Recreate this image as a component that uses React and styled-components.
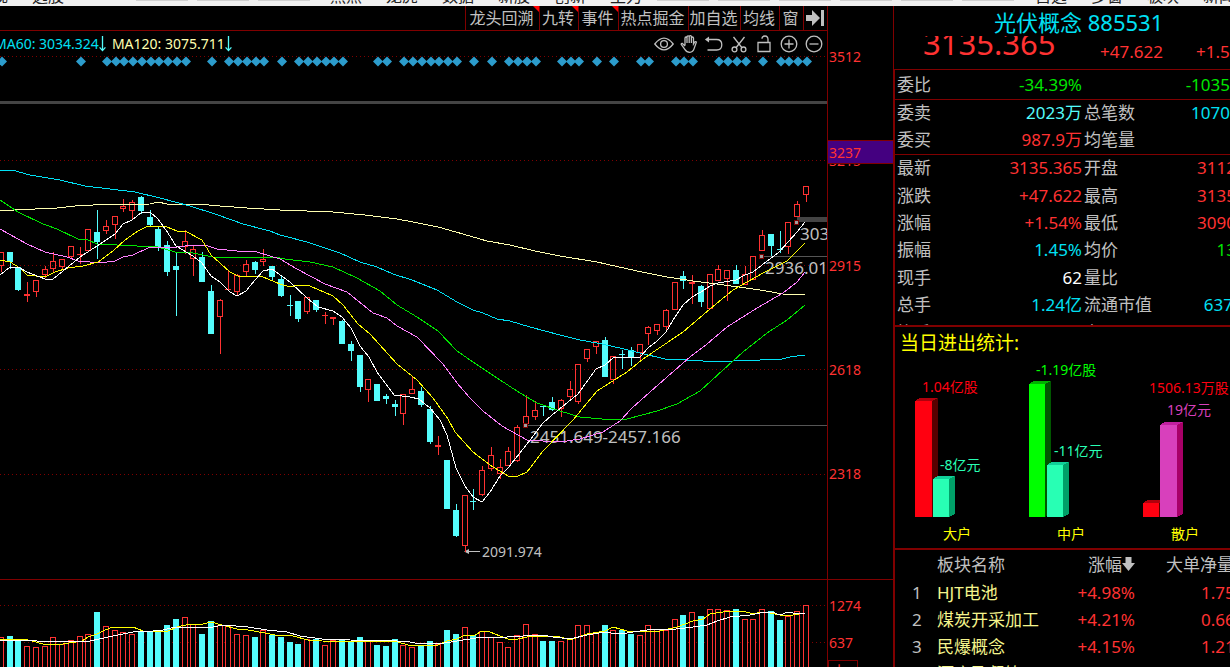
import React from "react";
import styled, { createGlobalStyle } from "styled-components";

const C = {
  line: "#800000",
  red: "#ff3232",
  cyan: "#54fcfc",
  blue: "#00e0f4",
  green: "#00e600",
  grey: "#c0c0c0",
  cream: "#ffffb0",
  pink: "#ff80ff",
};

const Global = createGlobalStyle`
  * { box-sizing: border-box; }
  body {
    margin: 0;
    background: #000;
    color: ${C.grey};
    font-family: "Noto Sans", "Noto Sans CJK SC", sans-serif;
    font-size: 17px;
    overflow: hidden;
  }
  button { font: inherit; color: inherit; background: none; border: 0; padding: 0; cursor: pointer; }
  h1, h2 { margin: 0; font-weight: 400; }
`;

/* ---------- data ---------- */

const STEP = 8.75;
const cx = (i) => Math.round(1.4 + i * STEP - 0.5);

// [kind, high, bodyTop, bodyBottom, low] ; kind: r = hollow, s = solid red, c = cyan
const CANDLES = [
  ["r", 252, 252, 266, 272], ["c", 252, 252, 262, 269], ["c", 267, 267, 290, 291],
  ["s", 282, 294, 296, 302], ["r", 280, 280, 292, 297], ["r", 266, 269, 275, 278],
  ["r", 252, 261, 269, 272], ["r", 259, 259, 267, 270], ["r", 246, 246, 257, 259],
  ["s", 247, 254, 255, 264], ["r", 229, 229, 251, 251], ["c", 210, 232, 242, 259],
  ["r", 220, 226, 231, 234], ["r", 216, 216, 225, 239], ["r", 199, 206, 209, 212],
  ["r", 200, 202, 211, 220], ["c", 196, 197, 211, 214], ["c", 210, 217, 225, 226],
  ["c", 227, 229, 247, 251], ["c", 241, 245, 272, 276], ["c", 253, 266, 270, 316],
  ["r", 230, 241, 247, 254], ["r", 246, 249, 259, 276], ["c", 252, 257, 282, 282],
  ["c", 285, 291, 334, 334], ["r", 299, 300, 317, 354], ["s", 271, 289, 290, 290],
  ["r", 274, 275, 292, 296], ["r", 260, 264, 272, 276], ["c", 261, 262, 270, 274],
  ["r", 249, 259, 262, 266], ["c", 266, 266, 277, 281], ["c", 276, 279, 296, 297],
  ["c", 295, 305, 306, 316], ["c", 301, 301, 319, 322], ["r", 297, 297, 312, 314],
  ["c", 300, 300, 310, 312], ["s", 312, 315, 316, 324], ["s", 317, 317, 319, 325],
  ["c", 320, 321, 344, 344], ["c", 341, 344, 351, 361], ["c", 355, 355, 387, 392],
  ["r", 379, 379, 390, 402], ["c", 384, 384, 401, 401], ["c", 394, 396, 399, 404],
  ["c", 400, 404, 407, 416], ["r", 394, 394, 414, 425], ["r", 377, 389, 394, 394],
  ["c", 387, 391, 405, 407], ["c", 406, 409, 442, 444], ["s", 436, 445, 447, 455],
  ["c", 460, 460, 509, 509], ["c", 504, 510, 536, 537], ["r", 495, 495, 546, 552],
  ["c", 489, 501, 502, 510], ["r", 466, 470, 495, 496], ["r", 447, 455, 469, 471],
  ["r", 459, 467, 474, 479], ["r", 447, 451, 466, 466], ["r", 425, 427, 461, 462],
  ["r", 395, 416, 424, 426], ["r", 401, 410, 417, 420], ["c", 406, 406, 407, 416],
  ["c", 397, 402, 410, 411], ["r", 399, 400, 409, 417], ["r", 381, 389, 397, 401],
  ["r", 364, 364, 402, 404], ["r", 349, 349, 359, 362], ["r", 341, 341, 347, 354],
  ["c", 337, 340, 377, 377], ["r", 356, 356, 380, 384], ["c", 350, 354, 355, 369],
  ["c", 347, 350, 358, 366], ["r", 344, 344, 353, 362], ["r", 326, 327, 334, 345],
  ["r", 324, 324, 331, 335], ["r", 309, 310, 327, 331], ["r", 282, 282, 310, 310],
  ["c", 271, 276, 281, 289], ["s", 275, 282, 284, 304], ["c", 285, 286, 302, 307],
  ["r", 274, 274, 309, 309], ["r", 265, 269, 281, 281], ["r", 270, 270, 279, 301],
  ["c", 265, 270, 284, 284], ["r", 266, 274, 285, 285], ["r", 256, 256, 280, 280],
  ["r", 230, 235, 251, 251], ["c", 234, 234, 246, 256], ["c", 231, 249, 250, 253],
  ["r", 222, 222, 247, 254], ["r", 201, 204, 217, 217], ["r", 186, 186, 195, 202],
];

const VOLUME_TOPS = [
  637, 636, 640, 646, 647, 646, 637, 644, 640, 636, 634, 612, 626, 630, 632, 634, 631, 631, 631, 625,
  619, 617, 624, 634, 621, 625, 626, 634, 635, 637, 630, 635, 637, 642, 644, 639, 639, 645, 640, 640,
  641, 637, 641, 645, 646, 639, 645, 647, 645, 641, 644, 630, 634, 627, 635, 631, 637, 642, 647, 635,
  624, 634, 641, 641, 641, 638, 625, 625, 633, 625, 630, 630, 634, 635, 625, 629, 630, 619, 615, 612,
  616, 609, 609, 610, 609, 619, 619, 609, 611, 620, 616, 611, 605,
];

const SIGNAL_RUNS = [
  [0, 0], [9, 9], [12, 21], [24, 24], [26, 30], [32, 32], [34, 39], [43, 44], [46, 52], [54, 54],
  [56, 56], [58, 61], [64, 66], [68, 68], [70, 70], [73, 74], [77, 79], [82, 85], [87, 87], [89, 92],
];
const SIGNALS = SIGNAL_RUNS.flatMap(([a, b]) => Array.from({ length: b - a + 1 }, (_, k) => a + k));

const AVERAGES = [
  [C.cream, "0,210 14,210 57,208 75,206 93,205 150,204 158,202 167,204 197,204 220,206 247,208 280,210 333,212 365,215 397,219 413,222 438,227 463,234 487,241 510,245 535,251 560,256 597,262 637,271 667,277 693,281 717,284 760,290 783,294 805,295"],
  [C.blue, "0,170 12,170 30,175 60,180 85,186 110,189 135,192 160,198 190,206 215,214 243,224 262,229 270,231 280,235 307,242 325,248 340,253 360,262 377,267 393,274 412,280 437,290 457,302 473,310 483,313 497,319 510,321 530,327 560,335 580,340 597,343 620,348 640,353 665,359 687,360 703,361 733,361 760,360 782,359 790,357 805,355"],
  [C.green, "0,200 18,212 43,224 57,229 78,239 88,240 97,244 137,246 158,247 175,252 193,253 213,257 275,257 285,259 310,262 333,267 357,278 380,291 397,305 417,317 438,331 457,351 473,362 497,378 520,393 537,403 560,411 580,417 602,419 627,419 657,411 677,404 700,391 723,370 743,352 767,333 787,320 805,305"],
  [C.pink, "0,229 27,244 45,252 67,257 78,261 90,262 107,262 115,261 123,257 133,255 150,247 177,247 193,245 205,245 217,249 237,251 257,252 270,256 280,259 297,269 325,284 347,292 373,313 387,318 397,326 417,337 443,364 457,383 470,398 483,411 502,426 527,440 543,441 560,442 580,439 603,432 620,421 632,408 667,377 690,357 707,344 727,327 757,308 783,293 797,282 805,272"],
  ["#ffff00", "0,260 10,262 20,268 27,275 45,277 55,272 68,268 83,266 98,262 113,251 125,240 138,231 148,226 167,227 177,231 187,232 202,240 211,255 230,272 238,276 263,277 280,284 290,287 298,285 310,286 333,296 343,305 358,324 370,334 397,364 417,380 433,398 448,419 455,432 473,452 493,467 510,477 518,476 527,472 543,451 573,420 597,391 627,372 643,359 683,332 710,309 733,290 763,273 787,261 805,243"],
  ["#ffffff", "0,275 10,267 18,267 27,272 45,279 53,279 63,271 80,257 97,246 115,234 123,224 132,220 142,212 150,212 158,219 168,233 176,246 193,256 202,263 211,276 220,282 230,292 237,296 246,291 255,280 263,271 272,269 290,282 307,298 318,307 333,311 342,317 351,328 360,346 369,357 377,372 394,395 410,397 419,399 430,408 440,420 447,435 456,468 465,486 473,497 482,502 490,492 500,476 508,468 527,444 543,423 552,415 578,394 596,369 605,365 613,358 640,357 648,348 657,341 666,332 675,317 683,305 692,297 701,292 710,286 718,283 736,280 745,275 753,272 762,265 779,252 788,242 797,232 805,222"],
];

const VOLUME_AVERAGES = [
  ["#ffff00", "0,640 7,639 23,639 32,641 43,644 63,644 82,641 88,637 97,634 105,630 113,627 133,627 143,631 157,632 168,631 177,627 190,624 203,624 211,622 222,625 237,629 248,630 265,633 275,635 293,636 308,640 322,641 398,642 408,645 423,645 438,645 447,641 457,639 463,636 475,635 482,631 490,632 500,636 508,639 518,639 527,637 557,636 570,640 587,634 605,631 613,627 627,631 640,631 660,631 677,627 693,621 703,619 710,614 723,612 743,611 753,614 762,612 770,613 780,615 793,615 805,613"],
  ["#ffffff", "0,640 32,640 37,641 90,641 113,636 133,632 153,631 163,630 175,627 213,627 223,625 248,627 267,630 287,632 300,636 322,639 350,640 397,641 410,642 420,644 430,643 438,644 457,641 470,639 482,637 507,637 523,636 543,635 553,637 570,639 587,635 605,632 617,634 627,633 640,631 655,629 668,630 693,627 707,625 717,621 730,617 750,615 760,613 772,612 780,615 788,612 798,614 805,613"],
];

/* ---------- frame ---------- */

const Screen = styled.div`
  display: flex;
  flex-direction: column;
  height: 100vh;
  overflow: hidden;
`;

const MenuStrip = styled.nav`
  display: flex;
  align-items: flex-end;
  flex: 0 0 6px;
  overflow: hidden;
  background: #f0f0f0;
  color: #222;
  font-size: 16px;
  line-height: 20px;
`;
const MenuGroup = styled.div`
  display: flex;
  flex: none;
  align-items: flex-end;
  width: ${(p) => p.$w}px;
  margin-left: ${(p) => p.$gap || 0}px;
`;
const MenuButton = styled.button`
  flex: 0 0 56px;
  text-align: left;
  line-height: 20px;
`;
const MenuField = styled.span`
  flex: 0 0 52px;
  height: 1px;
  margin: 0 9px 5px 0;
  background: #d0d0d0;
`;

const Body = styled.main`
  display: grid;
  grid-template-columns: minmax(0, 1fr) 66px 337px;
  flex: 1;
  min-height: 0;
`;
const Column = styled.section`
  display: flex;
  flex-direction: column;
  min-width: 0;
  overflow: hidden;
`;

/* ---------- chart column ---------- */

const Toolbar = styled.div`
  display: flex;
  flex: 0 0 25px;
  justify-content: flex-end;
  border-bottom: 1px solid ${C.line};
`;
const ToolButton = styled.button`
  position: relative;
  display: flex;
  align-items: center;
  justify-content: center;
  width: ${(p) => p.$w}px;
  padding-right: 2px;
  border-left: 1px solid ${C.line};
  font-size: 16px;
  line-height: 22px;
  white-space: nowrap;
`;
const Corner = styled.span`
  position: absolute;
  top: 0;
  right: 0;
  width: 6px;
  height: 6px;
  background: #ff0000;
  clip-path: polygon(0 0, 100% 0, 100% 100%);
`;
const LegendRow = styled.div`
  display: flex;
  flex: 0 0 25px;
  align-items: center;
  justify-content: space-between;
`;
const Legend = styled.div`
  display: flex;
  gap: 6px;
  margin-left: -6px;
  font-size: 14px;
  line-height: 20px;
  white-space: nowrap;
`;
const LegendItem = styled.span`
  display: flex;
  align-items: center;
  color: ${(p) => p.$color};
`;
const IconRow = styled.div`
  display: flex;
  margin-right: 1px;
`;
const IconButton = styled.button`
  display: flex;
  justify-content: center;
  width: 25px;
`;
const Plot = styled.svg`
  display: block;
  flex: 0 0 ${(p) => p.$h}px;
  width: 100%;
  height: ${(p) => p.$h}px;
`;

const ICONS = {
  显示: <><path d="M0.8 10Q10 -1.6 19.2 10Q10 21.6 0.8 10Z" /><circle cx="10" cy="10" r="3.4" /></>,
  拖动: <path d="M6 11.5V4.2Q6 3 7 3T8 4.2V9V3Q8 1.8 9.1 1.8T10.2 3V9V2.8Q10.2 1.6 11.3 1.6T12.4 2.8V9V4Q12.4 3 13.4 3T14.5 4V10L15.6 8.2Q16.4 7.2 17.4 8L15.2 14.4Q14 18.3 10.8 18.3Q7.6 18.3 6 15.6L2.2 10.4Q2.2 9.2 3.5 9.5L6 12" />,
  撤销: <><path d="M3 5.5H12.5Q17.8 5.5 17.8 10.8T12.5 16H3.5" /><path d="M2 5.5L4.4 3.8V7.2Z" fill="currentColor" /></>,
  剪切: <><path d="M4.5 3L13.2 14M15.5 3L6.8 14" /><circle cx="5.5" cy="15.4" r="2.4" /><circle cx="14.5" cy="15.4" r="2.4" /></>,
  解锁: <path d="M4 8.5H16V17.5H4ZM14 8.5V5.5Q14 2 11 2T8 4.8" />,
  放大: <><circle cx="10" cy="10" r="7.8" /><path d="M5.5 10H14.5M10 5.5V14.5" /></>,
  缩小: <><circle cx="10" cy="10" r="7.8" /><path d="M5.5 10H14.5" /></>,
};

function DownMark() {
  return (
    <svg width="7" height="16" viewBox="0 0 7 16" fill="none" stroke={C.cyan} strokeWidth="1.3" aria-hidden="true">
      <path d="M3.5 0V14.5M0.6 11.4L3.5 14.6L6.4 11.4" />
    </svg>
  );
}

function Candle({ i, kind, high, top, bottom, low }) {
  const x = cx(i);
  const color = kind === "c" ? C.cyan : C.red;
  if (kind === "r") {
    return (
      <g stroke={color} fill="none">
        {high < top && <path d={`M${x + 0.5} ${high}V${top}`} />}
        {low > bottom && <path d={`M${x + 0.5} ${bottom}V${low}`} />}
        <rect x={x - 2.5} y={top + 0.5} width="5" height={bottom - top - 1} />
      </g>
    );
  }
  return (
    <g fill={color}>
      <rect x={x} y={high} width="1" height={low - high} />
      <rect x={x - 3} y={top} width="6" height={bottom - top} />
    </g>
  );
}

function Dots({ y }) {
  return <path d={`M0 ${y + 0.5}H827`} stroke={C.line} strokeDasharray="1 3" />;
}

function PricePlot() {
  return (
    <Plot $h={524} viewBox="0 56 827 524" preserveAspectRatio="xMaxYMin slice" role="img" aria-label="K线图">
      <g shapeRendering="crispEdges">
        {[56, 160, 265, 369, 474].map((y) => <Dots key={y} y={y} />)}
        <rect x="0" y="101" width="827" height="3" fill="#444" />
        <rect x="797" y="217" width="30" height="5" fill="#444" />
        <path d="M762 256.5H827M526 425.5H827" stroke="#555" />
        <rect x="0" y="579" width="827" height="1" fill={C.line} />
      </g>
      {SIGNALS.map((i) => (
        <path key={i} d={`M${cx(i) + 1} 56.5l5 5l-5 5l-5 -5z`} fill="#2c9ccc" />
      ))}
      <g fill={C.grey} fontSize="17">
        <text x="530" y="443">2451.649-2457.166</text>
        <text x="765" y="274">2936.01</text>
        <text x="800" y="240">303</text>
        <text x="482" y="557" fontSize="14">2091.974</text>
      </g>
      <path d="M465 551.5H480" stroke={C.grey} />
      <path d="M464 551.5L469 549V554Z" fill={C.grey} />
      <g shapeRendering="crispEdges">
        {CANDLES.map(([kind, high, top, bottom, low], i) => (
          <Candle key={i} i={i} kind={kind} high={high} top={top} bottom={bottom} low={low} />
        ))}
        {[[525, 425], [761, 256], [796, 222]].map(([x, y]) => (
          <rect key={x} x={x - 1.5} y={y - 1.5} width="4" height="4" fill="#a0a0a0" stroke={C.line} />
        ))}
        {AVERAGES.map(([color, points]) => (
          <polyline key={color} points={points} fill="none" stroke={color} />
        ))}
      </g>
    </Plot>
  );
}

function VolumePlot() {
  return (
    <Plot $h={87} viewBox="0 580 827 87" preserveAspectRatio="xMaxYMin slice" role="img" aria-label="成交量">
      <g shapeRendering="crispEdges">
        <Dots y={605} />
        <Dots y={642} />
        {VOLUME_TOPS.map((top, i) =>
          CANDLES[i][0] === "c" ? (
            <rect key={i} x={cx(i) - 3} y={top} width="6" height={680 - top} fill={C.cyan} />
          ) : (
            <rect key={i} x={cx(i) - 2.5} y={top + 0.5} width="5" height={680 - top} fill="#000" stroke={C.red} />
          )
        )}
        {VOLUME_AVERAGES.map(([color, points]) => (
          <polyline key={color} points={points} fill="none" stroke={color} />
        ))}
      </g>
    </Plot>
  );
}

/* ---------- axis column ---------- */

const Axis = styled(Column)`
  position: relative;
  border-left: 1px solid ${C.line};
  color: ${C.red};
  font-size: 14px;
  line-height: 20px;
`;
const AxisScale = styled.div`
  display: flex;
  flex-direction: column;
  justify-content: space-between;
  flex: 0 0 ${(p) => p.$h}px;
  padding: ${(p) => p.$pad};
  border-bottom: ${(p) => (p.$rule ? `1px solid ${C.line}` : "0")};
`;
const AxisBadge = styled.div`
  position: absolute;
  top: 134px;
  left: 0;
  right: 0;
  height: 24px;
  padding-left: 1px;
  line-height: 24px;
  background: #440080;
  border: solid ${C.line};
  border-width: 1px 0;
`;
const AxisUnit = styled.div`
  width: 30px;
  padding-left: 3px;
  border: 1px solid ${C.line};
`;

/* ---------- side column ---------- */

const Side = styled(Column)`
  border-left: 1px solid ${C.line};
`;
const QuoteHead = styled.header`
  flex: 0 0 64px;
  border-bottom: 1px solid ${C.line};
`;
const Title = styled.h1`
  height: 30px;
  padding-left: 100px;
  color: ${C.blue};
  font-size: 22px;
  line-height: 32px;
  white-space: nowrap;
`;
const PriceRow = styled.div`
  display: grid;
  grid-template-columns: 177px 96px 1fr;
  height: 33px;
  padding-left: 29px;
  overflow: hidden;
  color: ${C.red};
  line-height: 32px;
  white-space: nowrap;
`;
const BigPrice = styled.strong`
  margin-top: -5px;
  font-size: 31px;
  font-weight: 400;
  line-height: 24px;
`;
const Details = styled.div`
  border-left: 1px solid ${C.line};
`;
const QuoteBlock = styled.div`
  height: ${(p) => p.$h}px;
  overflow: hidden;
  border-bottom: ${(p) => p.$rule || 1}px solid ${C.line};
`;
const QuoteRows = styled.dl`
  display: flex;
  flex-direction: column;
  height: ${(p) => p.$h}px;
  margin: 0;
`;
const QuoteRow = styled.div`
  display: grid;
  grid-template-columns: 40px 145px 80px 1fr;
  align-items: center;
  flex: 1;
  padding: 0 0 2px 2px;
  line-height: 25px;
  white-space: nowrap;
`;
const Label = styled.dt`
  margin: 0;
  padding-left: ${(p) => p.$inset || 0}px;
`;
const Value = styled.dd`
  margin: 0;
  margin-right: -${(p) => p.$bleed || 0}px;
  color: ${(p) => p.$color};
  text-align: right;
`;

const StatBlock = styled.section`
  height: 223px;
  overflow: hidden;
  border-bottom: 2px solid ${C.line};
`;
const StatTitle = styled.h2`
  height: 33px;
  padding-left: 5px;
  color: #ffff00;
  font-size: 19px;
  line-height: 32px;
`;
const StatChart = styled.svg`
  display: block;
`;

const BoardTable = styled.table`
  width: 100%;
  table-layout: fixed;
  border-collapse: collapse;
  white-space: nowrap;
  th, td { padding: 0; height: 27px; line-height: 26px; font-weight: 400; text-align: left; }
  th { height: 29px; }
`;
const NumCell = styled.td`
  padding-left: 17px !important;
`;
const NameCell = styled.td`
  color: #f4f48c;
`;
const PctCell = styled.td`
  color: ${(p) => (p.as === "th" ? C.grey : C.red)};
  text-align: right !important;
`;
const NetCell = styled.td`
  padding-left: ${(p) => (p.as === "th" ? 31 : 66)}px !important;
  color: ${(p) => p.$color || "inherit"};
`;

function Row({ a, av, ac, b, bv, bc, bleed }) {
  return (
    <QuoteRow>
      <Label>{a}</Label>
      <Value $color={ac}>{av}</Value>
      <Label $inset={2}>{b}</Label>
      <Value $color={bc} $bleed={bleed}>{bv}</Value>
    </QuoteRow>
  );
}

function Bar({ x, top, w, colors }) {
  const [front, side, cap] = colors;
  const base = 517;
  return (
    <g>
      <path d={`M${x + w} ${top}l6 -3V${base - 3}l-6 3z`} fill={side} />
      <path d={`M${x} ${top}l5 -3h${w + 1}l-6 3z`} fill={cap} />
      <rect x={x} y={top} width={w} height={base - top} fill={front} />
    </g>
  );
}

const RED = ["#ff0010", "#580000", "#b0000c"];
const TEAL = ["#28ffb4", "#00a068", "#10d098"];
const GREEN = ["#00ff00", "#005800", "#00b000"];
const MAGENTA = ["#d840bc", "#a80068", "#c020a0"];

const MENU_A = ["发现", "选股"];
const MENU_B = ["热点", "龙虎", "数据", "新股", "创新", "主力"];
const MENU_C = ["自选", "多窗", "板块", "新闻"];
const TOOLS = [
  ["龙头回溯", 74, true], ["九转", 39, true], ["事件", 40, true], ["热点掘金", 70],
  ["加自选", 52], ["均线", 39], ["窗", 24],
];
const BOARDS = [
  [1, "HJT电池", "+4.98%", "1.75", C.red],
  [2, "煤炭开采加工", "+4.21%", "0.66", C.red],
  [3, "民爆概念", "+4.15%", "1.21", C.red],
  [4, "酒店及餐饮", "+4.11%", "1.18", C.green],
];

export default function App() {
  return (
    <Screen>
      <Global />
      <MenuStrip>
        <MenuGroup $w={112} $gap={-24}>{MENU_A.map((t) => <MenuButton key={t}>{t}</MenuButton>)}</MenuGroup>
        <MenuGroup $w={183} $gap={48}>{[0, 1, 2].map((k) => <MenuField key={k} />)}</MenuGroup>
        <MenuGroup $w={327} $gap={11}>{MENU_B.map((t) => <MenuButton key={t}>{t}</MenuButton>)}</MenuGroup>
        <MenuGroup $w={366}>{[0, 1, 2, 3, 4, 5].map((k) => <MenuField key={k} />)}</MenuGroup>
        <MenuGroup $w={224} $gap={12}>{MENU_C.map((t) => <MenuButton key={t}>{t}</MenuButton>)}</MenuGroup>
      </MenuStrip>

      <Body>
        <Column>
          <Toolbar>
            {TOOLS.map(([text, w, hot]) => (
              <ToolButton key={text} $w={w}>{text}{hot && <Corner />}</ToolButton>
            ))}
            <ToolButton $w={24} aria-label="收起">
              <svg width="20" height="18" viewBox="0 0 20 18" fill={C.grey} aria-hidden="true">
                <path d="M1 6H7V1L15 9L7 17V12H1ZM16 1H19V17H16Z" />
              </svg>
            </ToolButton>
          </Toolbar>
          <LegendRow>
            <Legend>
              <LegendItem $color={C.blue}>MA60: 3034.324<DownMark /></LegendItem>
              <LegendItem $color={C.cream}>MA120: 3075.711<DownMark /></LegendItem>
            </Legend>
            <IconRow>
              {Object.entries(ICONS).map(([name, shape]) => (
                <IconButton key={name} aria-label={name}>
                  <svg width="20" height="20" viewBox="0 0 20 20" fill="none" stroke="currentColor" strokeWidth="1.3" aria-hidden="true">{shape}</svg>
                </IconButton>
              ))}
            </IconRow>
          </LegendRow>
          <PricePlot />
          <VolumePlot />
        </Column>

        <Axis>
          <AxisScale $h={574} $pad="41px 0 95px 1px" $rule>
            {["3512", "3215", "2915", "2618", "2318"].map((t) => <span key={t}>{t}</span>)}
          </AxisScale>
          <AxisScale $h={80} $pad="16px 0 7px 1px">
            <span>1274</span>
            <span>637</span>
          </AxisScale>
          <AxisUnit>十万</AxisUnit>
          <AxisBadge>3237</AxisBadge>
        </Axis>

        <Side>
          <QuoteHead>
            <Title>光伏概念 885531</Title>
            <PriceRow>
              <BigPrice>3135.365</BigPrice>
              <span>+47.622</span>
              <span>+1.5</span>
            </PriceRow>
          </QuoteHead>
          <Details>
            <QuoteBlock $h={30}>
              <QuoteRows $h={30}>
                <Row a="委比" av="-34.39%" ac={C.green} bv="-1035" bc={C.green} />
              </QuoteRows>
            </QuoteBlock>
            <QuoteBlock $h={55}>
              <QuoteRows $h={54}>
                <Row a="委卖" av="2023万" ac={C.cyan} b="总笔数" bv="1070" bc={C.blue} />
                <Row a="委买" av="987.9万" ac={C.red} b="均笔量" />
              </QuoteRows>
            </QuoteBlock>
            <QuoteBlock $h={172} $rule={2}>
              <QuoteRows $h={192}>
                <Row a="最新" av="3135.365" ac={C.red} b="开盘" bv="3112" bc={C.red} bleed={6} />
                <Row a="涨跌" av="+47.622" ac={C.red} b="最高" bv="3135" bc={C.red} bleed={6} />
                <Row a="涨幅" av="+1.54%" ac={C.red} b="最低" bv="3090" bc={C.red} bleed={6} />
                <Row a="振幅" av="1.45%" ac={C.blue} b="均价" bv="13" bc={C.green} bleed={6} />
                <Row a="现手" av="62" ac="#fff" b="量比" />
                <Row a="总手" av="1.24亿" ac={C.blue} b="流通市值" bv="637" bc={C.blue} bleed={3} />
                <Row a="换手" b="市盈" />
              </QuoteRows>
            </QuoteBlock>

            <StatBlock>
              <StatTitle>当日进出统计:</StatTitle>
              <StatChart width="335" height="188" viewBox="895 360 335 188" role="img" aria-label="当日进出统计">
                <g shapeRendering="crispEdges">
                  <Bar x={915} top={401} w={17} colors={RED} />
                  <Bar x={933} top={479} w={16} colors={TEAL} />
                  <Bar x={1029} top={384} w={16} colors={GREEN} />
                  <Bar x={1047} top={465} w={16} colors={TEAL} />
                  <Bar x={1143} top={503} w={16} colors={RED} />
                  <Bar x={1160} top={425} w={17} colors={MAGENTA} />
                </g>
                <g fontSize="14">
                  <text x="922" y="392" fill="#ff0010">1.04亿股</text>
                  <text x="940" y="470" fill="#28ffb4">-8亿元</text>
                  <text x="1036" y="375" fill="#00ff00">-1.19亿股</text>
                  <text x="1054" y="456" fill="#28ffb4">-11亿元</text>
                  <text x="1149" y="393" fill="#ff0010">1506.13万股</text>
                  <text x="1167" y="415" fill="#d840bc">19亿元</text>
                  <g fill="#ffff00">
                    <text x="943" y="539">大户</text>
                    <text x="1057" y="539">中户</text>
                    <text x="1171" y="539">散户</text>
                  </g>
                </g>
              </StatChart>
            </StatBlock>

            <BoardTable>
              <colgroup>
                <col width="42" />
                <col width="110" />
                <col width="88" />
                <col />
              </colgroup>
              <thead>
                <tr>
                  <NumCell as="th" />
                  <th>板块名称</th>
                  <PctCell as="th">
                    涨幅
                    <svg width="13" height="14" viewBox="0 0 13 14" fill={C.grey} aria-hidden="true">
                      <path d="M3.5 0H9.5V6H13L6.5 14L0 6H3.5Z" />
                    </svg>
                  </PctCell>
                  <NetCell as="th">大单净量</NetCell>
                </tr>
              </thead>
              <tbody>
                {BOARDS.map(([n, name, pct, net, color]) => (
                  <tr key={n}>
                    <NumCell>{n}</NumCell>
                    <NameCell>{name}</NameCell>
                    <PctCell>{pct}</PctCell>
                    <NetCell $color={color}>{net}</NetCell>
                  </tr>
                ))}
              </tbody>
            </BoardTable>
          </Details>
        </Side>
      </Body>
    </Screen>
  );
}
